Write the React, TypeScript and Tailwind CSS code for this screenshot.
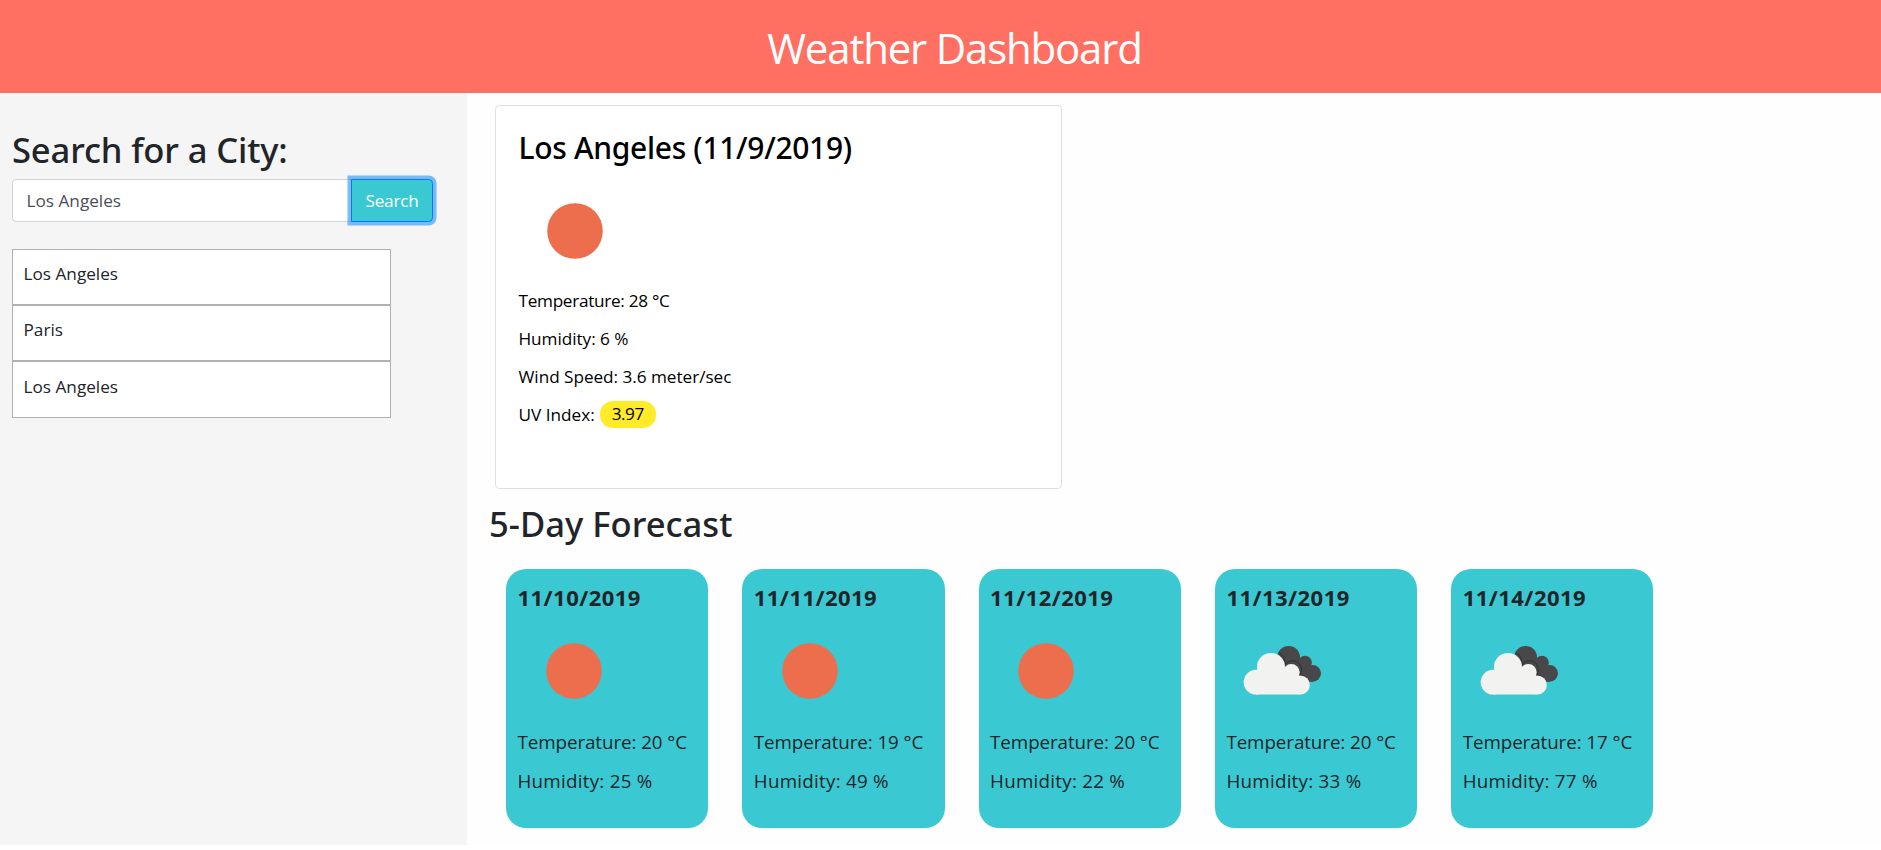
type Sky = 'clear' | 'clouds';

interface Day {
  date: string;
  sky: Sky;
  temp: number;
  humidity: number;
}

const history = ['Los Angeles', 'Paris', 'Los Angeles'];

const forecast: Day[] = [
  { date: '11/10/2019', sky: 'clear', temp: 20, humidity: 25 },
  { date: '11/11/2019', sky: 'clear', temp: 19, humidity: 49 },
  { date: '11/12/2019', sky: 'clear', temp: 20, humidity: 22 },
  { date: '11/13/2019', sky: 'clouds', temp: 20, humidity: 33 },
  { date: '11/14/2019', sky: 'clouds', temp: 17, humidity: 77 },
];

function SkyIcon({ sky }: { sky: Sky }) {
  if (sky === 'clear') {
    return (
      <svg viewBox="0 0 110 110" className="block h-[110px] w-[110px]">
        <circle cx="55" cy="55" r="27.8" fill="#ec6e4c" />
      </svg>
    );
  }
  return (
    <svg viewBox="-8 -42 330 330" className="block h-[110px] w-[110px]">
      <g fill="#48484a">
        <circle cx="177" cy="82" r="34" />
        <circle cx="226" cy="98" r="20.5" />
        <circle cx="249" cy="130" r="25" />
        <path d="M150 90h70l29 40v25h-50z" />
      </g>
      <g fill="none" stroke="#2f2f31" strokeWidth="3">
        <path d="M147 67a42 42 0 0 1 19 37a25 25 0 0 1 45 30a28 28 0 0 1 21 12" />
      </g>
      <g fill="#f2f2f0">
        <circle cx="79" cy="156.500" r="37" />
        <circle cx="124" cy="111" r="42" />
        <circle cx="185" cy="127" r="25" />
        <circle cx="212" cy="165" r="28.5" />
        <path d="M79 120h106l27 20v53.500H79z" />
      </g>
    </svg>
  );
}

function ForecastCard({ day }: { day: Day }) {
  return (
    <article className="h-[259px] w-[202.300px] shrink-0 rounded-[20px] bg-[#3ac9d3] pt-[14.500px] pl-[11.500px] text-[18.800px] leading-[28px]">
      <h3 className="text-[22px] leading-[26px] font-bold tracking-[0.450px]">{day.date}</h3>
      <div className="mt-[6.500px] mb-[1.500px] pl-px">
        <SkyIcon sky={day.sky} />
      </div>
      <p className="mb-[11px] tracking-[-0.080px] whitespace-nowrap">Temperature: {day.temp} °C</p>
      <p className="tracking-[0.250px]">Humidity: {day.humidity} %</p>
    </article>
  );
}

export default function App() {
  return (
    <div className="flex h-[845px] flex-col overflow-hidden bg-[#fefefe] font-['Open_Sans','Noto_Sans',sans-serif] text-[17.200px] text-[#212529]">
      <header className="h-[93px] shrink-0 bg-[#ff7063] pt-[0.500px] pl-[28px] text-center text-white">
        <h1 className="text-[42px] leading-[93px] tracking-[-1.200px]">Weather Dashboard</h1>
      </header>
      <div className="flex grow">
        <aside className="w-[467px] shrink-0 bg-[#f5f5f5] pt-[36px] pl-[12px]">
          <h2 className="font-['Noto_Sans',sans-serif] text-[34.600px] leading-[42px] font-medium tracking-[-0.150px]">
            Search for a City:
          </h2>
          <form className="mt-[8px] flex h-[43px]">
            <input
              defaultValue="Los Angeles"
              className="w-[339px] rounded-l-[4.400px] border border-r-0 border-[#ced4da] bg-white pl-[13.500px] text-[#495057] outline-none"
            />
            <button
              type="button"
              className="w-[82px] rounded-r-[4.400px] border border-[#007bff] bg-[#3ac9d3] tracking-[-0.250px] text-white shadow-[0_0_0_3.520px_rgba(0,123,255,0.5)]"
            >
              Search
            </button>
          </form>
          <ul className="mt-[27px] w-[379px]">
            {history.map((city, i) => (
              <li
                key={i}
                className="h-[56px] border border-[#b0b0b0] bg-white pt-[10.500px] pl-[10.500px] leading-[26px] last:h-[57px] last:pt-[11.500px]"
              >
                {city}
              </li>
            ))}
          </ul>
        </aside>
        <main className="grow">
          <section className="mt-[12px] ml-[28px] h-[384px] w-[567px] rounded-[4.400px] border border-[#dfdfdf] bg-white pt-[23.500px] pl-[22.500px] leading-[26px] text-black">
            <h2 className="font-['Noto_Sans',sans-serif] text-[30px] leading-[36px] font-medium tracking-[-0.320px]">
              Los Angeles (11/9/2019)
            </h2>
            <div className="mt-[10px] mb-[2px] pl-[1.500px]">
              <SkyIcon sky="clear" />
            </div>
            <p className="mb-[12px] tracking-[-0.300px]">Temperature: 28 °C</p>
            <p className="mb-[12px] tracking-[-0.050px]">Humidity: 6 %</p>
            <p className="mb-[11.500px] tracking-[-0.040px]">Wind Speed: 3.6 meter/sec</p>
            <p className="flex items-center gap-[5px]">
              UV Index:
              <span className="h-[27px] w-[56px] rounded-[13px] bg-[#ffeb27] text-center tracking-[-0.500px]">3.97</span>
            </p>
          </section>
          <h2 className="mt-[14px] ml-[22px] font-['Noto_Sans',sans-serif] text-[34.600px] leading-[42px] font-medium tracking-[0.020px]">
            5-Day Forecast
          </h2>
          <div className="mt-[24px] ml-[39px] flex gap-[34px]">
            {forecast.map((day) => (
              <ForecastCard key={day.date} day={day} />
            ))}
          </div>
        </main>
      </div>
    </div>
  );
}
